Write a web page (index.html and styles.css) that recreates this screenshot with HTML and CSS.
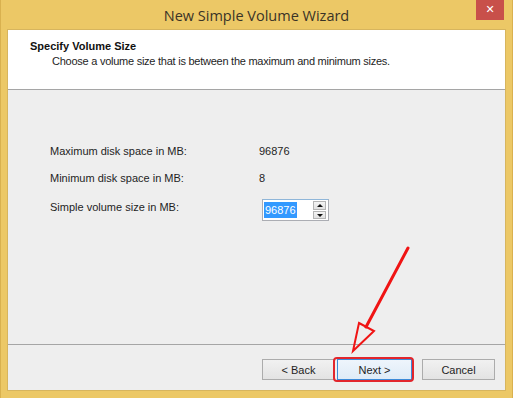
FILE: index.html
```html
<!DOCTYPE html>
<html lang="en">
<head>
    <meta charset="UTF-8">
    <title>New Simple Volume Wizard</title>
    <link rel="stylesheet" href="styles.css">
</head>
<body>

    <div class="window">
        <div class="titlebar">
            <span></span>
            <span class="title">New Simple Volume Wizard</span>
            <span class="close-button">&#x2715;</span>
        </div>

        <div class="client">
            <div class="header">
                <div class="header-title">Specify Volume Size</div>
                <div class="header-desc">Choose a volume size that is between the maximum and minimum sizes.</div>
            </div>

            <div class="content">
                <div class="row">
                    <span class="label">Maximum disk space in MB:</span>
                    <span class="value">96876</span>
                </div>
                <div class="row">
                    <span class="label">Minimum disk space in MB:</span>
                    <span class="value">8</span>
                </div>
                <div class="row row-spin">
                    <span class="label">Simple volume size in MB:</span>
                    <div class="spinner">
                        <span class="spin-text"><span class="selected">96876</span></span>
                        <div class="spin-buttons">
                            <span class="spin-up"></span>
                            <span class="spin-down"></span>
                        </div>
                    </div>
                </div>
            </div>

            <div class="footer">
                <button class="btn btn-back">&lt; Back</button>
                <button class="btn btn-next">Next &gt;</button>
                <button class="btn">Cancel</button>
            </div>
        </div>

        <!-- annotation over the screenshot -->
        <div class="highlight"></div>
        <svg class="arrow" width="513" height="398" viewBox="0 0 513 398">
            <line x1="408" y1="248" x2="366" y2="327" stroke="#f01414" stroke-width="3" stroke-linecap="round"/>
            <polygon points="359,323 374,331 353,351" fill="none" stroke="#f01414" stroke-width="2" stroke-linejoin="miter"/>
        </svg>
    </div>

</body>
</html>
```

FILE: styles.css
```css
body {
    margin: 0;
    padding: 0;
    font-family: 'Liberation Sans', Arial, sans-serif;
    font-size: 11px;
    color: #1e1e1e;
    overflow: hidden;
}

.window {
    position: relative;
    width: 513px;
    height: 398px;
    background-color: #ecc866;
    box-shadow: inset 1px 0 0 #d9b14f, inset -1px 0 0 #d9b14f;
    display: flex;
    flex-direction: column;
}

.titlebar {
    height: 29px;
    display: grid;
    grid-template-columns: 1fr auto 1fr;
}

.title {
    font-family: 'Open Sans', 'Noto Sans', sans-serif;
    font-size: 14.5px;
    color: #3a3326;
    line-height: 29px;
    padding-top: 1px;
}

.close-button {
    justify-self: end;
    align-self: start;
    width: 28px;
    height: 20px;
    margin-right: 9px;
    background-color: #c8504a;
    color: #fff;
    font-family: 'DejaVu Sans', sans-serif;
    font-size: 11px;
    font-weight: bold;
    line-height: 20px;
    text-align: center;
}

.client {
    flex-grow: 1;
    margin: 0 7px 7px 7px;
    border: 1px solid #d7b55e;
    background-color: #eeeeee;
    display: flex;
    flex-direction: column;
}

.header {
    background-color: #fff;
    border-bottom: 1px solid #a5a5a5;
    padding: 10px 0 0 22px;
    box-sizing: border-box;
    height: 60px;
}

.header-title {
    font-weight: bold;
    line-height: 13px;
    color: #111;
}

.header-desc {
    margin-top: 2px;
    padding-left: 22px;
    line-height: 13px;
    letter-spacing: -0.25px;
}

.content {
    flex-grow: 1;
    padding: 55px 0 0 42px;
    display: flex;
    flex-direction: column;
    gap: 14px;
    border-bottom: 1px solid #a5a5a5;
}

.row {
    display: flex;
    align-items: flex-start;
    line-height: 13px;
}

.label {
    width: 209px;
}

.row-spin {
    margin-top: -6px;
}

.row-spin .label {
    padding-top: 8px;
}

.spinner {
    width: 67px;
    height: 22px;
    margin: 6px 0 0 3px;
    box-sizing: border-box;
    border: 1px solid #abadb3;
    border-top-color: #8fb6d9;
    background-color: #fff;
    display: flex;
    align-items: center;
}

.spin-text {
    flex-grow: 1;
    padding-left: 1px;
}

.selected {
    background-color: #3399ff;
    color: #fff;
    padding: 2px 1px;
}

.spin-buttons {
    width: 13px;
    height: 18px;
    margin-right: 2px;
    display: flex;
    flex-direction: column;
    gap: 1px;
}

.spin-up,
.spin-down {
    flex-grow: 1;
    border: 1px solid #b4b4b4;
    background: linear-gradient(#f4f4f4, #e1e1e1);
    position: relative;
}

.spin-up::after,
.spin-down::after {
    content: "";
    position: absolute;
    left: 3px;
    top: 2px;
    border-left: 3px solid transparent;
    border-right: 3px solid transparent;
}

.spin-up::after {
    border-bottom: 3px solid #111;
}

.spin-down::after {
    border-top: 3px solid #111;
}

.footer {
    height: 45px;
    display: flex;
    justify-content: flex-end;
    align-items: flex-start;
    padding: 14px 10px 0 0;
    box-sizing: border-box;
}

.btn {
    width: 73px;
    height: 21px;
    border: 1px solid #acacac;
    background: linear-gradient(#f1f1f1, #e3e3e3);
    font-family: 'Liberation Sans', Arial, sans-serif;
    font-size: 11px;
    color: #1e1e1e;
    padding: 0;
}

.btn-back {
    margin-right: 2px;
}

.btn-next {
    width: 75px;
    margin-right: 10px;
    border-color: #3c8ad8;
    background: linear-gradient(#eef5fc, #dfebf7);
}

.highlight {
    position: absolute;
    left: 333px;
    top: 357px;
    width: 77px;
    height: 21px;
    border: 2px solid #e2252b;
    border-radius: 4px;
}

.arrow {
    position: absolute;
    left: 0;
    top: 0;
    pointer-events: none;
}
```
